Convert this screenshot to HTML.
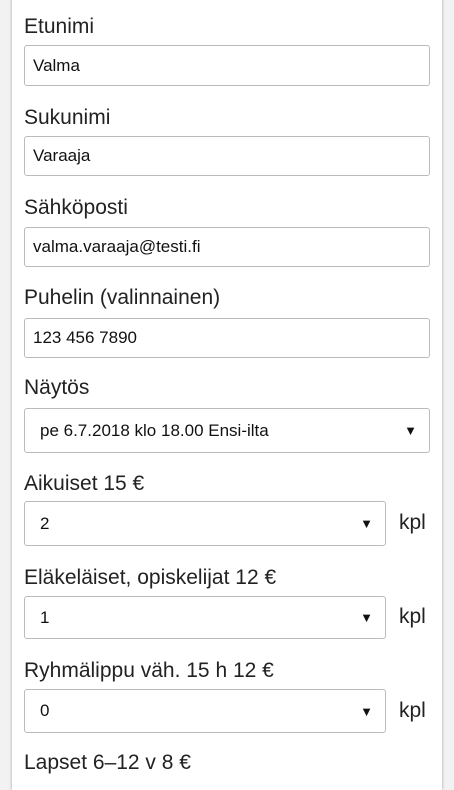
<!DOCTYPE html>
<html><head><style>
body{margin:0;background:#f2f2f2;width:454px;height:771px;overflow:hidden;font-family:"Liberation Sans",sans-serif;}
.card{position:absolute;left:12px;top:-10px;width:430px;height:800px;background:#fff;box-shadow:0 0 3px rgba(0,0,0,.35);}
.l{position:absolute;left:24px;font-size:21px;color:#222;}
.i{position:absolute;left:24px;width:406px;border:1px solid #bbb;border-radius:3px;background:#fff;font-size:17px;color:#111;box-sizing:border-box;padding-left:8px;display:flex;align-items:center;}
.s{width:362px;padding-left:15px;}
.a{position:absolute;right:12px;font-size:13px;}
.k{position:absolute;left:399px;font-size:21px;color:#222;}
</style></head><body>
<div class="card"></div>
<div class="l" style="top:15px">Etunimi</div>
<div class="i" style="top:45px;height:41px">Valma</div>
<div class="l" style="top:106px">Sukunimi</div>
<div class="i" style="top:136px;height:40px">Varaaja</div>
<div class="l" style="top:196px">Sähköposti</div>
<div class="i" style="top:227px;height:40px">valma.varaaja@testi.fi</div>
<div class="l" style="top:286px">Puhelin (valinnainen)</div>
<div class="i" style="top:318px;height:40px">123 456 7890</div>
<div class="l" style="top:376px">Näytös</div>
<div class="i" style="top:408px;height:45px;padding-left:15px">pe 6.7.2018 klo 18.00 Ensi-ilta<span class="a">▼</span></div>
<div class="l" style="top:472px">Aikuiset 15 €</div>
<div class="i s" style="top:501px;height:45px">2<span class="a">▼</span></div><div class="k" style="top:511px">kpl</div>
<div class="l" style="top:566px">Eläkeläiset, opiskelijat 12 €</div>
<div class="i s" style="top:596px;height:43px">1<span class="a">▼</span></div><div class="k" style="top:605px">kpl</div>
<div class="l" style="top:659px">Ryhmälippu väh. 15 h 12 €</div>
<div class="i s" style="top:689px;height:44px">0<span class="a">▼</span></div><div class="k" style="top:699px">kpl</div>
<div class="l" style="top:751px">Lapset 6–12 v 8 €</div>
</body></html>
